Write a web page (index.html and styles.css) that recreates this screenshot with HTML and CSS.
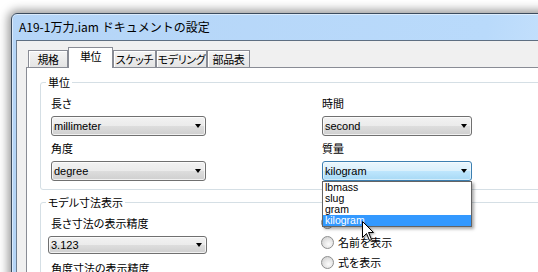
FILE: index.html
```html
<!DOCTYPE html>
<html lang="ja">

<head>
  <meta charset="utf-8">
  <link rel="stylesheet" href="styles.css">
</head>

<body>
  <div class="window">
    <div class="titlebar">A19-1万力.iam ドキュメントの設定</div>
    <div class="client">
      <div class="tabs">
        <div class="tab t1">規格</div>
        <div class="tab t2 active">単位</div>
        <div class="tab t3">スケッチ</div>
        <div class="tab t4">モデリング</div>
        <div class="tab t5">部品表</div>
      </div>
      <div class="panel">
        <fieldset class="group">
          <legend>単位</legend>
          <div class="grid">
            <div class="field">
              <div class="label">長さ</div>
              <div class="combo">millimeter</div>
            </div>
            <div class="field">
              <div class="label">時間</div>
              <div class="combo">second</div>
            </div>
            <div class="field">
              <div class="label">角度</div>
              <div class="combo">degree</div>
            </div>
            <div class="field">
              <div class="label">質量</div>
              <div class="combo-wrap">
                <div class="combo focus">kilogram</div>
                <ul class="droplist">
                  <li>lbmass</li>
                  <li>slug</li>
                  <li>gram</li>
                  <li class="selected">kilogram</li>
                </ul>
              </div>
            </div>
          </div>
        </fieldset>

        <fieldset class="group group2">
          <legend>モデル寸法表示</legend>
          <div class="grid">
            <div class="field">
              <div class="label">長さ寸法の表示精度</div>
              <div class="combo wide">3.123</div>
              <div class="label next">角度寸法の表示精度</div>
            </div>
            <div class="radios">
              <div class="radio covered"></div>
              <div class="radio">名前を表示</div>
              <div class="radio">式を表示</div>
            </div>
          </div>
        </fieldset>
      </div>
    </div>
  </div>

  <svg class="cursor" width="14" height="21" viewBox="0 0 14 21">
    <path d="M0.5 0.5 L0.5 16.5 L4.5 12.5 L7.5 19.5 L9.5 18.5 L6.5 11.5 L11.5 11.5 Z" fill="#fff" stroke="#000" stroke-width="1" />
  </svg>
</body>

</html>
```

FILE: styles.css
```css
html,
body {
  margin: 0;
}

body {
  width: 538px;
  height: 272px;
  overflow: hidden;
  background: #fff;
  font-family: "Noto Sans CJK JP", sans-serif;
  font-size: 11px;
  color: #000;
}

.window {
  margin: 13px 0 0 11px;
  width: 580px;
  height: 300px;
  padding-left: 4px;
  border: 1px solid #3c4c5e;
  border-radius: 6px 6px 0 0;
  background: linear-gradient(100deg, #b5d5f7 0%, #b9dafb 75%, #d3e8fd 100%);
  box-shadow: 0 0 10px 3px rgba(0, 0, 0, 0.4), inset 0 0 0 1px rgba(255, 255, 255, 0.5);
}

.titlebar {
  height: 26px;
  line-height: 26px;
  padding-left: 3px;
  font-size: 12px;
  white-space: nowrap;
}

.client {
  height: 260px;
  padding: 6px 0 0 9px;
  border-top: 1px solid #5e6f82;
  border-left: 1px solid #6e7f92;
  background: #f0f0f0;
}

.tabs {
  display: flex;
  align-items: flex-end;
  height: 21px;
  margin-bottom: -1px;
  padding-left: 2px;
  position: relative;
  z-index: 1;
}

.tab {
  box-sizing: border-box;
  height: 17px;
  margin-bottom: 1px;
  border: 1px solid #898c95;
  border-bottom: none;
  background: linear-gradient(#f4f4f4, #e4e4e4);
  box-shadow: inset 1px 1px 0 #fff;
  text-align: center;
  line-height: 16px;
  font-size: 11px;
  letter-spacing: -0.4px;
  font-feature-settings: "palt";
  white-space: nowrap;
  overflow: hidden;
}

.tab.active {
  height: 21px;
  margin-bottom: 0;
  background: #fff;
  box-shadow: none;
  line-height: 17px;
}

.t1 { width: 40px; }
.t2 { width: 45px; }
.t3 { width: 43px; }
.t4 { width: 51px; }
.t5 { width: 43px; }

.panel {
  height: 230px;
  padding: 7px 13px 0;
  border: 1px solid #898c95;
  background: #fff;
}

.group {
  margin: 0;
  min-width: 0;
  padding: 7px 0 8px 10px;
  border: 1px solid #d5dfe5;
  border-radius: 3px;
}

.group legend {
  margin-left: -5px;
  padding: 0 2px;
  line-height: 14px;
  font-feature-settings: "palt";
}

.group2 {
  margin-top: 5px;
}

.grid {
  display: grid;
  grid-template-columns: 155px 150px;
  column-gap: 116px;
  row-gap: 5px;
}

.label {
  line-height: 14px;
  margin-bottom: 6px;
  white-space: nowrap;
  font-feature-settings: "palt";
}

.label.next {
  margin-top: 7px;
}

.combo {
  box-sizing: border-box;
  height: 20px;
  display: flex;
  align-items: center;
  justify-content: space-between;
  padding: 0 4px 0 2px;
  border: 1px solid #707070;
  border-radius: 3px;
  background: linear-gradient(#f2f2f2 0%, #ebebeb 50%, #dddddd 51%, #cfcfcf 100%);
  box-shadow: inset 0 0 0 1px rgba(255, 255, 255, 0.7);
  font-family: "Liberation Sans", sans-serif;
  font-size: 11px;
}

.combo::after {
  content: "";
  border-left: 3.5px solid transparent;
  border-right: 3.5px solid transparent;
  border-top: 4px solid #000;
}

.combo.focus {
  border-color: #3c7fb1;
  background: linear-gradient(#eaf6fd 0%, #d9f0fc 50%, #bee6fd 51%, #a7d9f5 100%);
  box-shadow: inset 0 0 0 1px rgba(255, 255, 255, 0.5);
}

.combo.wide {
  width: 159px;
  margin-top: 2px;
  margin-left: -3px;
  height: 18px;
}

.combo-wrap {
  position: relative;
}

.droplist {
  position: absolute;
  top: 100%;
  left: 0;
  width: 150px;
  box-sizing: border-box;
  margin: 0;
  padding: 0;
  list-style: none;
  border: 1px solid #646464;
  background: #fff;
  box-shadow: 2px 2px 3px rgba(0, 0, 0, 0.35);
  font-family: "Liberation Sans", sans-serif;
  font-size: 10.5px;
  line-height: 11px;
  z-index: 2;
}

.droplist li {
  padding-left: 2px;
}

.droplist li.selected {
  background: #3399ff;
  color: #fff;
}

.radios {
  display: flex;
  flex-direction: column;
  margin-top: -4px;
  margin-left: -1px;
}

.radio {
  display: flex;
  align-items: center;
  gap: 4px;
  height: 20px;
  white-space: nowrap;
  font-feature-settings: "palt";
}

.radio::before {
  content: "";
  box-sizing: border-box;
  width: 13px;
  height: 13px;
  border: 1px solid #8e8f8f;
  border-radius: 50%;
  background: radial-gradient(circle at 60% 65%, #fcfcfc 0%, #e6e6e6 45%, #c8c8c8 100%);
}

.cursor {
  position: absolute;
  left: 362px;
  top: 221px;
  z-index: 5;
  filter: drop-shadow(1px 1px 1px rgba(0, 0, 0, 0.4));
}
```
